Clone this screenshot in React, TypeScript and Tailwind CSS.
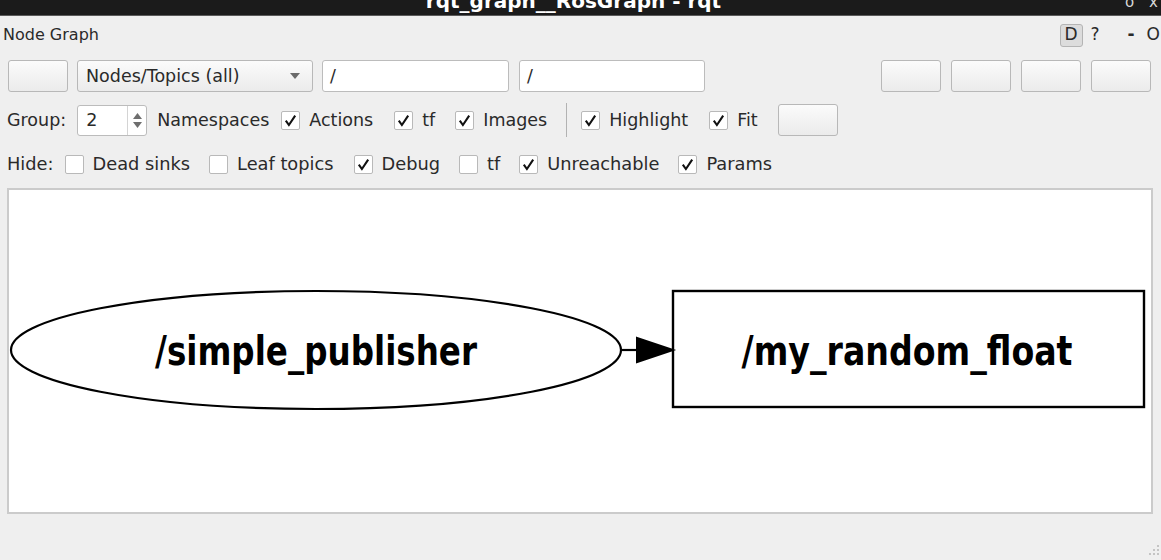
import React from "react";

const Check = ({ on }: { on: boolean }) => (
  <span className="w-[19px] h-[19px] bg-white border border-[#b9b9b9] rounded-[2px] flex items-center justify-center shrink-0">
    {on && (
      <svg width="13" height="13" viewBox="0 0 13 13">
        <path d="M1.8 6.6 L4.9 11 L11.2 1.6" fill="none" stroke="#111" strokeWidth="2.1" strokeLinejoin="miter" />
      </svg>
    )}
  </span>
);

const CB = ({ on, label, className = "" }: { on: boolean; label: string; className?: string }) => (
  <div className={"flex items-center gap-[9px] " + className}>
    <Check on={on} />
    <span>{label}</span>
  </div>
);

const Btn = ({ className = "" }: { className?: string }) => (
  <div
    className={
      "h-[32px] w-[60px] rounded-[3px] border border-[#b8b8b8] bg-linear-to-b from-[#fbfbfb] to-[#ebebeb] shrink-0 " +
      className
    }
  />
);

const Field = ({ className = "" }: { className?: string }) => (
  <div
    className={
      "h-[32px] rounded-[3px] border border-[#bcbcbc] bg-white flex items-center pl-[7px] shrink-0 " + className
    }
  >
    /
  </div>
);

export default function App() {
  return (
    <div
      className="w-[1161px] h-[560px] bg-[#efefef] text-[#2a2a2a] overflow-hidden flex flex-col relative"
      style={{ fontFamily: '"DejaVu Sans", sans-serif' }}
    >
      {/* title bar */}
      <div className="h-[16px] bg-[#1b1b1b] border-b border-[#5a5a5a] overflow-hidden flex justify-center relative shrink-0">
        <div className="text-white font-bold text-[20px] leading-[20px] -mt-[9px] -ml-[14px] whitespace-nowrap">
          rqt_graph__RosGraph - rqt
        </div>
        <div className="absolute right-[3px] -top-[9px] flex gap-[15px] text-[#d8d8d8] text-[15px]">
          <span>o</span>
          <span>x</span>
        </div>
      </div>

      {/* dock title */}
      <div className="h-[38px] flex items-center pl-[3px] pr-[1px] shrink-0">
        <span className="text-[16px]">Node Graph</span>
        <div className="ml-auto flex items-center text-[17px]">
          <span className="w-[23px] h-[23px] rounded-[3px] border border-[#b4b4b4] bg-[#dcdcdc] flex items-center justify-center">
            D
          </span>
          <span className="ml-[8px]">?</span>
          <span className="ml-[28px] font-bold">-</span>
          <span className="ml-[12px]">O</span>
        </div>
      </div>

      <div className="text-[17.5px] flex flex-col">
        {/* row 1 */}
        <div className="h-[32px] mt-[6px] flex items-center pl-[8px] pr-[10px]">
          <Btn className="w-[59px]" />
          <div className="ml-[9px] h-[32px] w-[236px] rounded-[3px] border border-[#b8b8b8] bg-linear-to-b from-[#fbfbfb] to-[#ebebeb] flex items-center pl-[8px] shrink-0">
            <span>Nodes/Topics (all)</span>
            <svg className="ml-auto mr-[12px]" width="10" height="6" viewBox="0 0 10 6">
              <path d="M0 0 L10 0 L5 6 Z" fill="#6a6a6a" />
            </svg>
          </div>
          <Field className="ml-[9px] w-[187px]" />
          <Field className="ml-[10px] w-[186px]" />
          <div className="ml-auto flex gap-[10px]">
            <Btn />
            <Btn />
            <Btn />
            <Btn />
          </div>
        </div>

        {/* row 2 */}
        <div className="h-[34px] mt-[11px] flex items-center pl-[7px]">
          <span>Group:</span>
          <div className="ml-[11px] h-[31px] w-[70px] rounded-[3px] border border-[#bcbcbc] bg-white flex items-stretch shrink-0">
            <span className="flex items-center pl-[8px] w-[49px]">2</span>
            <div className="border-l border-[#d4d4d4] flex-1 flex flex-col items-center justify-center gap-[3px]">
              <svg width="9" height="6" viewBox="0 0 9 6">
                <path d="M0 6 L4.5 0 L9 6 Z" fill="#6e6e6e" />
              </svg>
              <svg width="9" height="6" viewBox="0 0 9 6">
                <path d="M0 0 L9 0 L4.5 6 Z" fill="#6e6e6e" />
              </svg>
            </div>
          </div>
          <span className="ml-[10px]">Namespaces</span>
          <CB on label="Actions" className="ml-[12px]" />
          <CB on label="tf" className="ml-[21px]" />
          <CB on label="Images" className="ml-[20px]" />
          <div className="ml-[19px] w-px h-[34px] bg-[#b2b2b2]" />
          <CB on label="Highlight" className="ml-[14px]" />
          <CB on label="Fit" className="ml-[21px]" />
          <Btn className="ml-[20px] h-[31px]" />
        </div>

        {/* row 3 */}
        <div className="h-[30px] mt-[12px] flex items-center pl-[7px] text-[17.8px]">
          <span>Hide:</span>
          <CB on={false} label="Dead sinks" className="ml-[11px]" />
          <CB on={false} label="Leaf topics" className="ml-[19px]" />
          <CB on label="Debug" className="ml-[20px]" />
          <CB on={false} label="tf" className="ml-[19px]" />
          <CB on label="Unreachable" className="ml-[19px]" />
          <CB on label="Params" className="ml-[19px]" />
        </div>
      </div>

      {/* graph view */}
      <div className="mt-[9px] ml-[7px] w-[1146px] h-[326px] bg-white border-2 border-[#cbcbcb] shrink-0">
        <svg width="1142" height="322" viewBox="0 0 1142 322">
          <ellipse cx="307" cy="160" rx="305" ry="59" fill="none" stroke="#000" strokeWidth="2.2" />
          <line x1="612" y1="160" x2="630" y2="160" stroke="#000" strokeWidth="2.2" />
          <polygon points="628,148 664,160 628,172" fill="#000" stroke="#000" strokeWidth="2" />
          <rect x="664" y="101" width="471" height="116" fill="none" stroke="#000" strokeWidth="2.4" />
          <text
            x="307"
            y="175"
            textAnchor="middle"
            fontSize="41"
            fontWeight="bold"
            textLength="322"
            lengthAdjust="spacingAndGlyphs"
            fill="#000"
            style={{ fontFamily: '"DejaVu Sans", sans-serif' }}
          >
            /simple_publisher
          </text>
          <text
            x="898"
            y="175"
            textAnchor="middle"
            fontSize="41"
            fontWeight="bold"
            textLength="331"
            lengthAdjust="spacingAndGlyphs"
            fill="#000"
            style={{ fontFamily: '"DejaVu Sans", sans-serif' }}
          >
            /my_random_float
          </text>
        </svg>
      </div>

      {/* size grip */}
      <svg className="absolute right-[1px] bottom-[2px]" width="14" height="14" viewBox="0 0 14 14">
        {[
          [12, 2],
          [8, 6],
          [12, 6],
          [4, 10],
          [8, 10],
          [12, 10],
        ].map(([x, y], i) => (
          <rect key={i} x={x - 1} y={y - 1} width="2" height="2" fill="#c4c4c4" />
        ))}
      </svg>
    </div>
  );
}
